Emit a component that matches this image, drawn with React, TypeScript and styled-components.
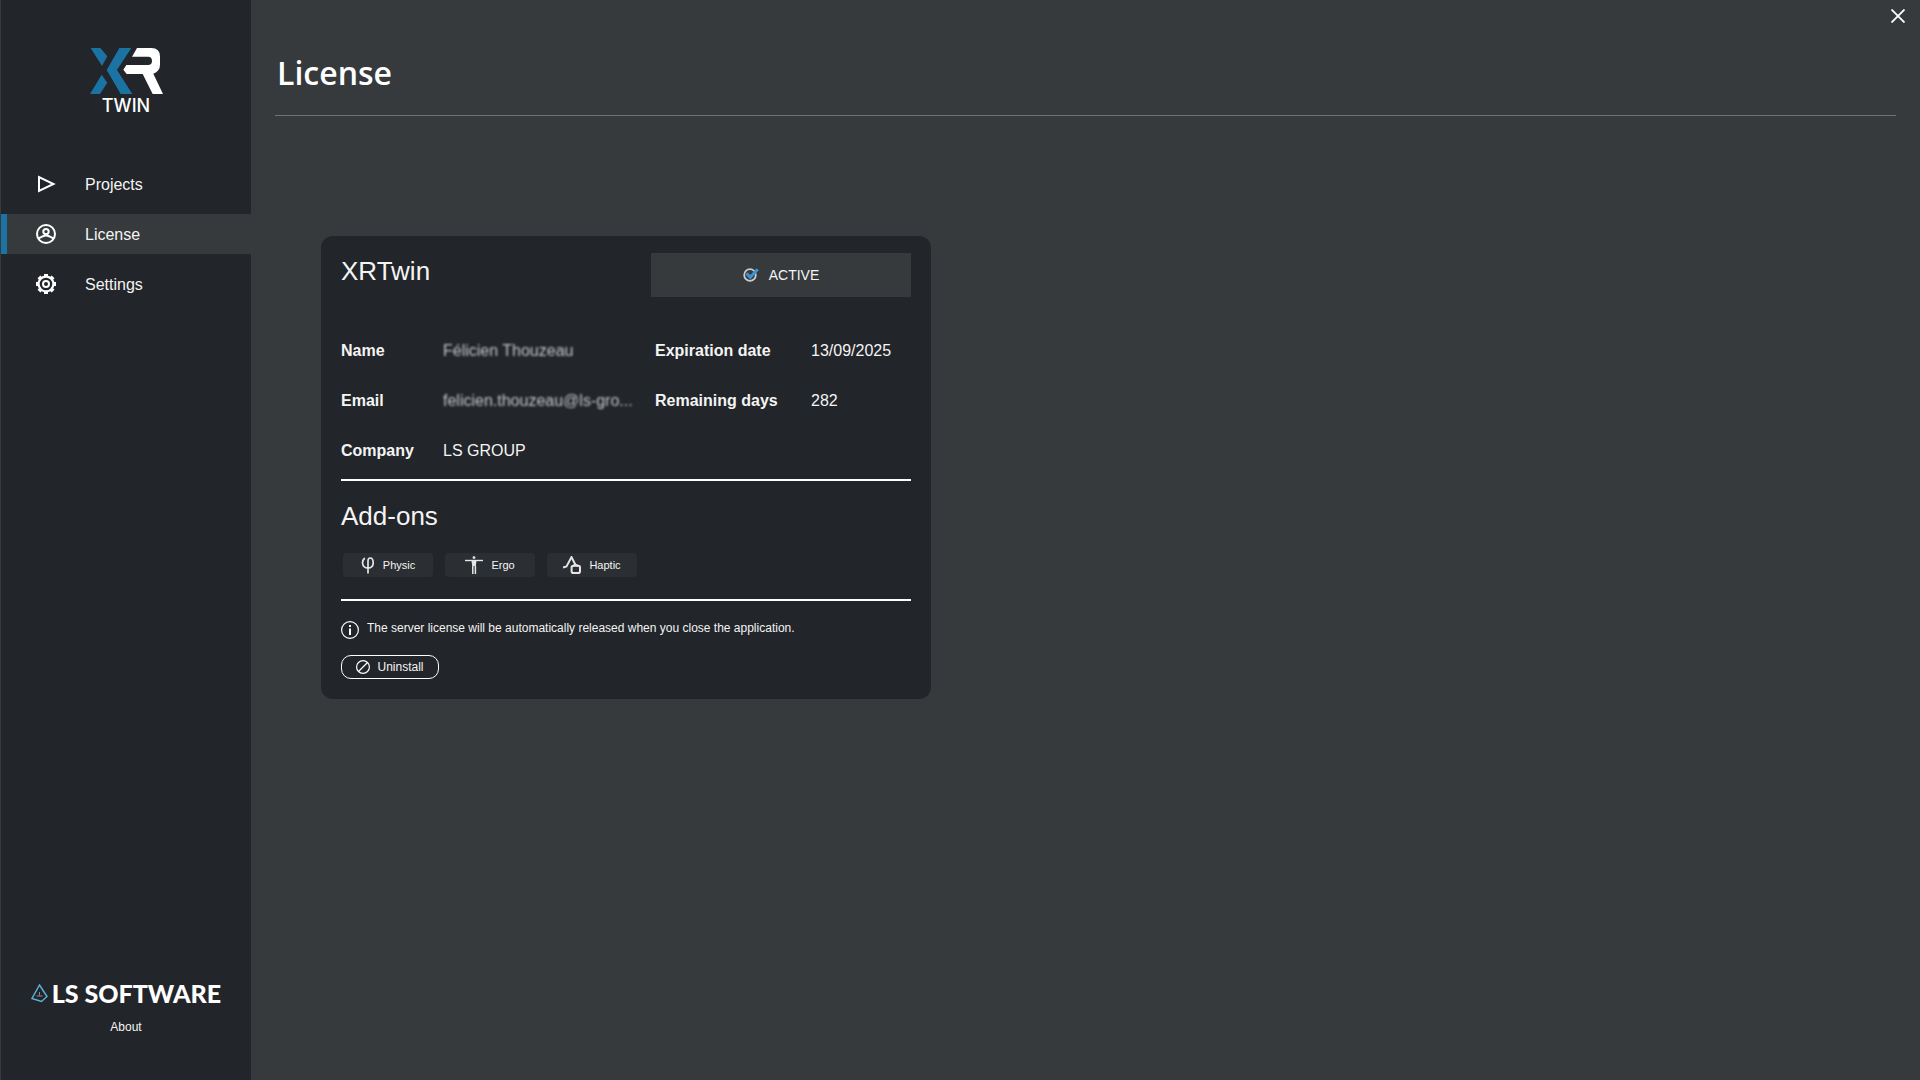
import React from "react";
import styled, { createGlobalStyle } from "styled-components";

const color = {
  panel: "#222529",
  surface: "#363a3c",
  chip: "#2b2f33",
  accent: "#1a73a3",
  text: "#f4f4f4",
  muted: "#c4c6c8",
  rule: "#6f7375",
};

const GlobalStyle = createGlobalStyle`
  *, *::before, *::after { box-sizing: border-box; }
  body {
    margin: 0;
    background: ${color.surface};
    color: ${color.text};
    font-family: "Liberation Sans", Arial, sans-serif;
    font-size: 16px;
    line-height: 20px;
  }
  h1, h2, dl, dd, p, ul { margin: 0; padding: 0; }
  button { font: inherit; color: inherit; background: none; border: 0; padding: 0; cursor: pointer; }
  a { color: inherit; text-decoration: none; }
  svg { display: block; flex: none; }
`;

const Shell = styled.div`
  display: flex;
  min-height: 100vh;
`;

const Sidebar = styled.aside`
  flex: none;
  display: flex;
  flex-direction: column;
  width: 251px;
  padding-bottom: 45px;
  border-left: 1px solid ${color.surface};
  background: ${color.panel};
`;

const Brand = styled.div`
  display: flex;
  flex-direction: column;
  align-items: center;
  padding-top: 48px;
`;

const BrandName = styled.span`
  font-family: Inter, sans-serif;
  font-size: 18px;
  font-weight: 500;
  line-height: 24px;
  color: #fff;
`;

const Nav = styled.nav`
  display: flex;
  flex-direction: column;
  gap: 10px;
  margin-top: 46px;
`;

const NavLink = styled.a<{ $active?: boolean }>`
  display: flex;
  align-items: center;
  gap: 29px;
  height: 40px;
  padding-left: 29px;
  line-height: 22px;
  border-left: 6px solid ${(p) => (p.$active ? color.accent : "transparent")};
  background: ${(p) => (p.$active ? color.surface : "transparent")};
`;

const NavLabel = styled.span`
  padding-top: 2px;
`;

const SidebarFooter = styled.footer`
  display: flex;
  flex-direction: column;
  align-items: center;
  gap: 14px;
  margin-top: auto;
`;

const Vendor = styled.div`
  display: flex;
  align-items: center;
  gap: 4px;
  color: #fff;
  font-family: Lato, sans-serif;
  font-size: 25px;
  font-weight: 900;
  line-height: 24px;
`;

const SmallLink = styled.a`
  font-size: 12px;
  line-height: 16px;
`;

const Main = styled.main`
  flex: 1;
  min-width: 0;
  display: flex;
  flex-direction: column;
  padding: 9px 24px 40px;
`;

const CloseButton = styled.button`
  align-self: flex-end;
  margin-right: -9px;
`;

const PageTitle = styled.h1`
  margin-top: 27px;
  padding: 0 2px 19px;
  border-bottom: 1px solid ${color.rule};
  color: #fff;
  font-family: "Open Sans", "Noto Sans", sans-serif;
  font-size: 32px;
  font-weight: 600;
  line-height: 46px;
`;

const Card = styled.section`
  width: 610px;
  max-width: 100%;
  margin: 120px 0 0 46px;
  padding: 17px 20px 20px;
  border-radius: 12px;
  background: ${color.panel};
`;

const CardHeader = styled.header`
  display: flex;
  justify-content: space-between;
`;

const Heading = styled.h2`
  font-size: 26px;
  font-weight: 400;
  line-height: 36px;
`;

const Status = styled.div`
  display: flex;
  align-items: center;
  justify-content: center;
  gap: 10px;
  width: 260px;
  height: 44px;
  background: ${color.surface};
  font-size: 14px;
`;

const Details = styled.div`
  display: flex;
  gap: 20px;
  margin-top: 44px;
  padding-bottom: 18px;
  border-bottom: 2px solid #fff;
`;

const FieldList = styled.dl<{ $label: number }>`
  display: grid;
  grid-template-columns: ${(p) => p.$label}px auto;
  grid-auto-rows: 20px;
  row-gap: 30px;
  dt { font-weight: 700; }
  dd { white-space: nowrap; }
`;

const LeftFields = styled(FieldList)`
  width: 294px;
`;

const Redacted = styled.span`
  color: ${color.muted};
  filter: blur(1px);
`;

const AddOns = styled.div`
  padding: 17px 0 22px;
  border-bottom: 2px solid #fff;
`;

const ChipList = styled.ul`
  display: flex;
  gap: 12px;
  margin: 19px 2px 0;
  list-style: none;
`;

const Chip = styled.li`
  display: flex;
  align-items: center;
  justify-content: center;
  gap: 8px;
  width: 90px;
  height: 24px;
  border-radius: 4px;
  background: ${color.chip};
  font-size: 11px;
`;

const Note = styled.p`
  display: flex;
  gap: 8px;
  margin-top: 20px;
  font-size: 12px;
  line-height: 14px;
`;

const UninstallButton = styled.button`
  display: flex;
  align-items: center;
  justify-content: center;
  gap: 7px;
  width: 98px;
  height: 24px;
  margin-top: 16px;
  border: 1px solid #fff;
  border-radius: 10px;
  font-size: 12px;
`;

const XrMark = () => (
  <svg width="73" height="46" viewBox="60 54 219 138" aria-hidden="true">
    <g fill={color.accent}>
      <path d="M62 54H91L112 79L96 108Z" />
      <path d="M95 134L112 158L90 192H60Z" />
      <path d="M148 54H184L141 120L187 192H152L110 120Z" />
    </g>
    <path
      fill="#fff"
      d="M201 54H244Q270 54 270 80V104Q270 124 250 131L279 192H248L218 132H170L160 119L169 105H234Q246 105 246 93Q246 80 234 80H186Z"
    />
  </svg>
);

const PyramidMark = () => (
  <svg width="17" height="19" viewBox="0 0 17 19" fill="none" aria-hidden="true">
    <path d="M8.5 1L16 12.5L10.5 17.5L1 14.5Z" stroke="#5fb0dc" strokeWidth="1.4" />
    <path d="M8.5 8V11.5M5.5 12H11.5" stroke="#8b8d8f" />
  </svg>
);

const PlayIcon = () => (
  <svg width="20" height="20" viewBox="0 0 20 20" fill="none" stroke="#fff" strokeWidth="2" aria-hidden="true">
    <path d="M3 3V17L17.5 10Z" />
  </svg>
);

const UserIcon = () => (
  <svg width="20" height="20" viewBox="0 0 20 20" fill="none" stroke="#fff" strokeWidth="2" aria-hidden="true">
    <circle cx="10" cy="10" r="9" />
    <circle cx="10" cy="7.6" r="2.7" />
    <path d="M2.6 14.4L7 12.2Q10 11 13 12.2L17.4 14.4" />
  </svg>
);

const GearIcon = () => (
  <svg width="20" height="20" viewBox="0 0 20 20" fill="none" stroke="#fff" aria-hidden="true">
    <circle cx="10" cy="10" r="7.4" strokeWidth="2.2" />
    <circle cx="10" cy="10" r="3" strokeWidth="2" />
    <g strokeWidth="4">
      {[0, 45, 90, 135, 180, 225, 270, 315].map((angle) => (
        <path key={angle} d="M10 0V2.6" transform={`rotate(${angle} 10 10)`} />
      ))}
    </g>
  </svg>
);

const CloseIcon = () => (
  <svg width="14" height="14" viewBox="0 0 14 14" stroke="#fff" strokeWidth="1.8" aria-hidden="true">
    <path d="M0.5 0.5L13.5 13.5M13.5 0.5L0.5 13.5" />
  </svg>
);

const CheckIcon = () => (
  <svg width="16" height="14" viewBox="0 0 16 14" fill="none" aria-hidden="true">
    <circle cx="7" cy="7" r="5.8" stroke="#c9cbcc" strokeWidth="1.8" />
    <path d="M3.6 5.4L7.2 9.2L14.8 1.2" stroke="#3d92d1" strokeWidth="3" />
  </svg>
);

const PhiIcon = () => (
  <svg width="14" height="18" viewBox="0 0 14 18" fill="none" stroke="#e6e6e6" strokeWidth="1.7" aria-hidden="true">
    <path d="M3.8 2Q1.4 4 1.5 7Q2 12 7 12Q12 12 12.2 7Q12.2 2 9.2 2Q7 2 7 5V17.5" />
  </svg>
);

const BodyIcon = () => (
  <svg width="18" height="18" viewBox="0 0 18 18" stroke="#e6e6e6" aria-hidden="true">
    <path d="M0 4.5H18" strokeWidth="1.4" />
    <circle cx="9" cy="1.6" r="1.4" fill="#e6e6e6" stroke="none" />
    <path d="M6.4 4H11.6L10.8 10H7.2Z" fill="#e6e6e6" stroke="none" />
    <path d="M7.8 10V18M10.4 10V18" strokeWidth="1.5" />
  </svg>
);

const HapticIcon = () => (
  <svg width="18" height="18" viewBox="0 0 18 18" fill="none" stroke="#e6e6e6" aria-hidden="true">
    <path d="M0 11.5L3.5 10.5L8.5 1L12.5 9" strokeWidth="1.9" />
    <rect x="8.6" y="9.8" width="8.4" height="7.2" rx="1.8" strokeWidth="2" />
    <path d="M10 10.5Q12.5 7 15 10.5" strokeWidth="1.8" />
  </svg>
);

const InfoIcon = () => (
  <svg width="18" height="18" viewBox="0 0 18 18" fill="none" stroke="#fff" aria-hidden="true">
    <circle cx="9" cy="9" r="8.4" strokeWidth="1.2" />
    <path d="M9 4V6M9 7.5V14" strokeWidth="2" />
  </svg>
);

const BanIcon = () => (
  <svg width="14" height="14" viewBox="0 0 14 14" fill="none" stroke="#fff" strokeWidth="1.2" aria-hidden="true">
    <circle cx="7" cy="7" r="6.4" />
    <path d="M2.5 11.5L11.5 2.5" />
  </svg>
);

const navItems = [
  { label: "Projects", icon: <PlayIcon /> },
  { label: "License", icon: <UserIcon />, active: true },
  { label: "Settings", icon: <GearIcon /> },
];

const addOns = [
  { label: "Physic", icon: <PhiIcon /> },
  { label: "Ergo", icon: <BodyIcon /> },
  { label: "Haptic", icon: <HapticIcon /> },
];

export default function App() {
  return (
    <>
      <GlobalStyle />
      <Shell>
        <Sidebar>
          <Brand>
            <XrMark />
            <BrandName>TWIN</BrandName>
          </Brand>
          <Nav>
            {navItems.map((item) => (
              <NavLink
                key={item.label}
                href="#"
                $active={item.active}
                aria-current={item.active ? "page" : undefined}
              >
                {item.icon}
                <NavLabel>{item.label}</NavLabel>
              </NavLink>
            ))}
          </Nav>
          <SidebarFooter>
            <Vendor>
              <PyramidMark />
              LS SOFTWARE
            </Vendor>
            <SmallLink href="#">About</SmallLink>
          </SidebarFooter>
        </Sidebar>

        <Main>
          <CloseButton type="button" aria-label="Close">
            <CloseIcon />
          </CloseButton>
          <PageTitle>License</PageTitle>

          <Card>
            <CardHeader>
              <Heading>XRTwin</Heading>
              <Status>
                <CheckIcon />
                ACTIVE
              </Status>
            </CardHeader>

            <Details>
              <LeftFields $label={102}>
                <dt>Name</dt>
                <dd><Redacted>Félicien Thouzeau</Redacted></dd>
                <dt>Email</dt>
                <dd><Redacted>felicien.thouzeau@ls-gro...</Redacted></dd>
                <dt>Company</dt>
                <dd>LS GROUP</dd>
              </LeftFields>
              <FieldList $label={156}>
                <dt>Expiration date</dt>
                <dd>13/09/2025</dd>
                <dt>Remaining days</dt>
                <dd>282</dd>
              </FieldList>
            </Details>

            <AddOns>
              <Heading>Add-ons</Heading>
              <ChipList>
                {addOns.map((addOn) => (
                  <Chip key={addOn.label}>
                    {addOn.icon}
                    {addOn.label}
                  </Chip>
                ))}
              </ChipList>
            </AddOns>

            <Note>
              <InfoIcon />
              The server license will be automatically released when you close the application.
            </Note>
            <UninstallButton type="button">
              <BanIcon />
              Uninstall
            </UninstallButton>
          </Card>
        </Main>
      </Shell>
    </>
  );
}
